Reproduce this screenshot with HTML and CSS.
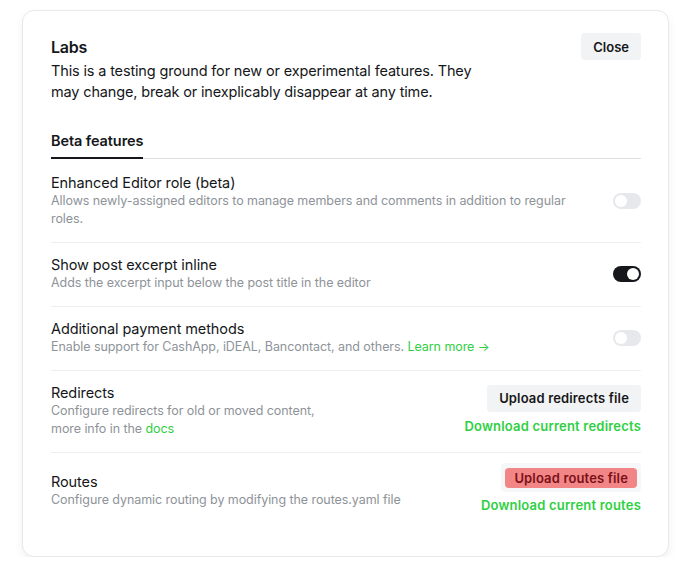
FILE: index.html
```html
<!DOCTYPE html>
<html lang="en">
<head>
  <meta charset="UTF-8" />
  <title>Labs</title>
  <link rel="stylesheet" href="styles.css">
</head>
<body>
  <div class="modal">
    <div class="modal-header">
      <div>
        <div class="modal-title">Labs</div>
        <div class="modal-desc">This is a testing ground for new or experimental features. They may change, break or inexplicably disappear at any time.</div>
      </div>
      <button class="close-btn">Close</button>
    </div>

    <div class="tabs">
      <div class="tab active">Beta features</div>
    </div>

    <div class="row first">
      <div class="row-text">
        <div class="row-title">Enhanced Editor role (beta)</div>
        <div class="row-desc">Allows newly-assigned editors to manage members and comments in addition to regular roles.</div>
      </div>
      <div class="toggle"><span class="knob"></span></div>
    </div>

    <div class="row">
      <div class="row-text">
        <div class="row-title">Show post excerpt inline</div>
        <div class="row-desc">Adds the excerpt input below the post title in the editor</div>
      </div>
      <div class="toggle on"><span class="knob"></span></div>
    </div>

    <div class="row">
      <div class="row-text">
        <div class="row-title">Additional payment methods</div>
        <div class="row-desc">Enable support for CashApp, iDEAL, Bancontact, and others. <a href="#">Learn more &rarr;</a></div>
      </div>
      <div class="toggle"><span class="knob"></span></div>
    </div>

    <div class="row files">
      <div class="row-text">
        <div class="row-title">Redirects</div>
        <div class="row-desc">Configure redirects for old or moved content,<br>more info in the <a href="#">docs</a></div>
      </div>
      <div class="row-actions">
        <button class="btn">Upload redirects file</button>
        <a class="dl-link" href="#">Download current redirects</a>
      </div>
    </div>

    <div class="row files last">
      <div class="row-text">
        <div class="row-title">Routes</div>
        <div class="row-desc">Configure dynamic routing by modifying the routes.yaml file</div>
      </div>
      <div class="row-actions">
        <div class="upload-box"><button class="btn danger">Upload routes file</button></div>
        <a class="dl-link" href="#">Download current routes</a>
      </div>
    </div>
  </div>
</body>
</html>
```

FILE: styles.css
```css
body {
  margin: 0;
  font-family: Inter, "Noto Sans", sans-serif;
  background-color: #fff;
  color: #15171a;
}

.modal {
  margin: 10px 0 0 22px;
  width: 647px;
  height: 547px;
  box-sizing: border-box;
  padding: 24px 27px 0 28px;
  border: 1px solid #e6e8eb;
  border-radius: 12px;
  box-shadow: 0 4px 10px rgba(0, 0, 0, 0.06);
  background: #fff;
}

.modal-header {
  display: flex;
  justify-content: space-between;
  align-items: flex-start;
}

.modal-title {
  font-size: 16px;
  font-weight: 600;
  letter-spacing: -0.2px;
  line-height: 24px;
}

.modal-desc {
  width: 440px;
  margin-top: 1px;
  font-size: 14.5px;
  line-height: 21px;
  letter-spacing: -0.15px;
}

.close-btn {
  margin-top: -2px;
  height: 27px;
  padding: 0 12px;
  font-family: inherit;
  font-size: 13px;
  font-weight: 600;
  color: #15171a;
  background-color: #f2f3f4;
  border: none;
  border-radius: 4px;
}

.tabs {
  margin-top: 29px;
  border-bottom: 1px solid #dddfe2;
  display: flex;
}

.tab {
  font-size: 14.5px;
  font-weight: 600;
  letter-spacing: -0.1px;
  padding-bottom: 6px;
  line-height: 20px;
}

.tab.active {
  border-bottom: 2px solid #15171a;
  margin-bottom: -1px;
}

/* строки настроек */
.row {
  display: flex;
  justify-content: space-between;
  align-items: center;
  padding: 13px 0 14px;
  border-bottom: 1px solid #eceef0;
}

.row.first {
  padding-top: 15px;
}

.row.last {
  border-bottom: none;
  padding-top: 10px;
}

.row-text {
  max-width: 530px;
}

.row-title {
  font-size: 14.5px;
  line-height: 18px;
  letter-spacing: -0.1px;
}

.row-desc {
  font-size: 12.5px;
  line-height: 18px;
  color: #8e9399;
  letter-spacing: -0.07px;
}

.row-desc a {
  color: #30cf43;
  text-decoration: none;
}

.toggle {
  width: 28px;
  height: 16px;
  border-radius: 8px;
  background-color: #e6e8eb;
  position: relative;
  flex-shrink: 0;
}

.toggle .knob {
  position: absolute;
  top: 2px;
  left: 2px;
  width: 12px;
  height: 12px;
  border-radius: 50%;
  background-color: #fff;
}

.toggle.on {
  background-color: #15171a;
}

.toggle.on .knob {
  left: 14px;
}

.row-actions {
  display: flex;
  flex-direction: column;
  align-items: flex-end;
  gap: 5px;
  margin-bottom: 3px;
}

.row.last .row-actions {
  gap: 4px;
  margin-bottom: 4px;
}

.btn {
  height: 27px;
  padding: 0 12px;
  font-family: inherit;
  font-size: 13px;
  font-weight: 600;
  letter-spacing: 0.15px;
  color: #15171a;
  background-color: #f2f3f4;
  border: none;
  border-radius: 4px;
}

.upload-box {
  background-color: #f6f7f8;
  padding: 4px;
  border-radius: 4px;
}

.btn.danger {
  height: 20px;
  padding: 0 9px;
  background-color: #f28585;
  color: #7a1018;
}

.dl-link {
  font-size: 13px;
  line-height: 18px;
  font-weight: 600;
  letter-spacing: 0.2px;
  color: #30cf43;
  text-decoration: none;
}
```
